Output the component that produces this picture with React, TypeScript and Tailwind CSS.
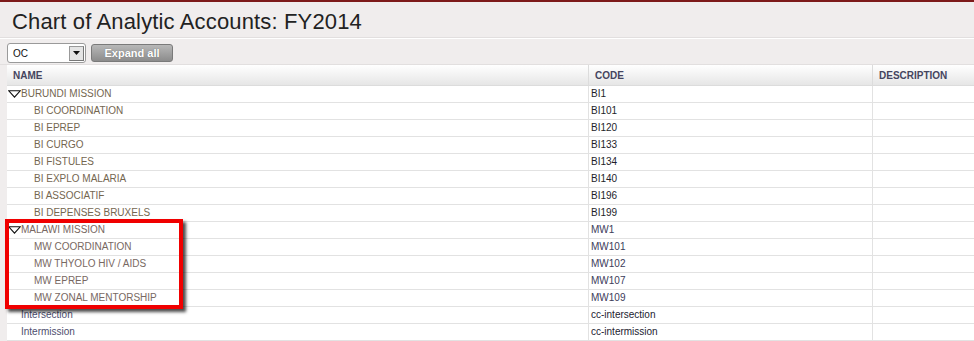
import React from "react";

type Row = { name: string; code: string; level: 0 | 1; parent?: boolean; nameColor: string; codeColor: string };

const rows: Row[] = [
  { name: "BURUNDI MISSION", code: "BI1", level: 0, parent: true, nameColor: "text-[#74664f]", codeColor: "text-[#1e1e2a]" },
  { name: "BI COORDINATION", code: "BI101", level: 1, nameColor: "text-[#74664f]", codeColor: "text-[#1e1e2a]" },
  { name: "BI EPREP", code: "BI120", level: 1, nameColor: "text-[#74664f]", codeColor: "text-[#1e1e2a]" },
  { name: "BI CURGO", code: "BI133", level: 1, nameColor: "text-[#74664f]", codeColor: "text-[#1e1e2a]" },
  { name: "BI FISTULES", code: "BI134", level: 1, nameColor: "text-[#74664f]", codeColor: "text-[#1e1e2a]" },
  { name: "BI EXPLO MALARIA", code: "BI140", level: 1, nameColor: "text-[#74664f]", codeColor: "text-[#1e1e2a]" },
  { name: "BI ASSOCIATIF", code: "BI196", level: 1, nameColor: "text-[#74664f]", codeColor: "text-[#1e1e2a]" },
  { name: "BI DEPENSES BRUXELS", code: "BI199", level: 1, nameColor: "text-[#74664f]", codeColor: "text-[#1e1e2a]" },
  { name: "MALAWI MISSION", code: "MW1", level: 0, parent: true, nameColor: "text-[#786862]", codeColor: "text-[#3c3c5a]" },
  { name: "MW COORDINATION", code: "MW101", level: 1, nameColor: "text-[#786862]", codeColor: "text-[#3c3c5a]" },
  { name: "MW THYOLO HIV / AIDS", code: "MW102", level: 1, nameColor: "text-[#786862]", codeColor: "text-[#3c3c5a]" },
  { name: "MW EPREP", code: "MW107", level: 1, nameColor: "text-[#786862]", codeColor: "text-[#3c3c5a]" },
  { name: "MW ZONAL MENTORSHIP", code: "MW109", level: 1, nameColor: "text-[#786862]", codeColor: "text-[#3c3c5a]" },
  { name: "Intersection", code: "cc-intersection", level: 0, nameColor: "text-[#4e4e6e]", codeColor: "text-[#222230]" },
  { name: "Intermission", code: "cc-intermission", level: 0, nameColor: "text-[#4e4e6e]", codeColor: "text-[#222230]" },
];

function Tri() {
  return (
    <svg width="13" height="8" viewBox="0 0 13 8" className="shrink-0">
      <path d="M0.8 0.8 H12.2 L6.5 7.2 Z" fill="none" stroke="#111" strokeWidth="1.1" />
    </svg>
  );
}

export default function App() {
  return (
    <div
      className="relative w-[974px] h-[341px] overflow-hidden bg-[#f0eded] border-t-2 border-[#7d1a1a]"
      style={{ fontFamily: '"Liberation Sans", Arial, sans-serif' }}
    >
      {/* Title */}
      <div className="h-[36px] pl-[12px] pt-[7px] border-b border-[#e2dfdf]">
        <h1 className="text-[22px] leading-[26px] text-[#222222] tracking-[0.15px]">Chart of Analytic Accounts: FY2014</h1>
      </div>
      <div className="h-px bg-white" />
      {/* Toolbar */}
      <div className="h-[26px] flex items-center gap-[5px] pl-[7px] pt-[3px] border-b border-[#e2dfdf]">
        <div className="w-[79px] h-[20px] bg-white border border-[#9a9a9a] rounded-[3px] flex items-center justify-between pl-[5px] pr-[1px]">
          <span className="text-[10px] text-[#111]">OC</span>
          <div className="w-[15px] h-[15px] bg-[#e4e4e4] border border-[#777] border-t-[#999] border-l-[#999] flex items-center justify-center">
            <svg width="7" height="4" viewBox="0 0 7 4"><path d="M0 0 H7 L3.5 4 Z" fill="#111" /></svg>
          </div>
        </div>
        <div className="w-[82px] h-[18px] rounded-[3px] border border-[#7a7a7a] bg-gradient-to-b from-[#b8b8b8] to-[#8c8c8c] flex items-center justify-center">
          <span className="text-[11px] font-bold text-white [text-shadow:0_0_1px_#666]">Expand all</span>
        </div>
      </div>
      {/* Table */}
      <div className="ml-[7px] bg-white">
        <div className="grid grid-cols-[581px_284px_1fr] h-[21px] bg-gradient-to-b from-white to-[#e6e6e6] border-b border-[#dcdcdc] text-[10px] font-bold text-[#454560]">
          <div className="flex items-center pl-[6px]">NAME</div>
          <div className="flex items-center pl-[6px] border-l border-[#dcdcdc]">CODE</div>
          <div className="flex items-center pl-[6px] border-l border-[#dcdcdc]">DESCRIPTION</div>
        </div>
        {rows.map((r) => (
          <div key={r.code} className="grid grid-cols-[581px_284px_1fr] h-[17px] border-b border-[#e2e2e2] text-[10px] leading-[16px]">
            <div className={`flex items-center ${r.level === 1 ? "pl-[27px]" : r.parent ? "pl-[1px]" : "pl-[14px]"} ${r.nameColor}`}>
              {r.parent && <Tri />}
              <span>{r.name}</span>
            </div>
            <div className={`flex items-center pl-[2px] border-l border-[#e2e2e2] ${r.codeColor}`}>{r.code}</div>
            <div className="border-l border-[#e2e2e2]" />
          </div>
        ))}
      </div>
      {/* Annotation box */}
      <div className="absolute left-[5px] top-[217px] w-[178px] h-[90px] border-[4px] border-[#f00000] shadow-[3px_3px_3px_rgba(0,0,0,0.7)]" />
    </div>
  );
}
